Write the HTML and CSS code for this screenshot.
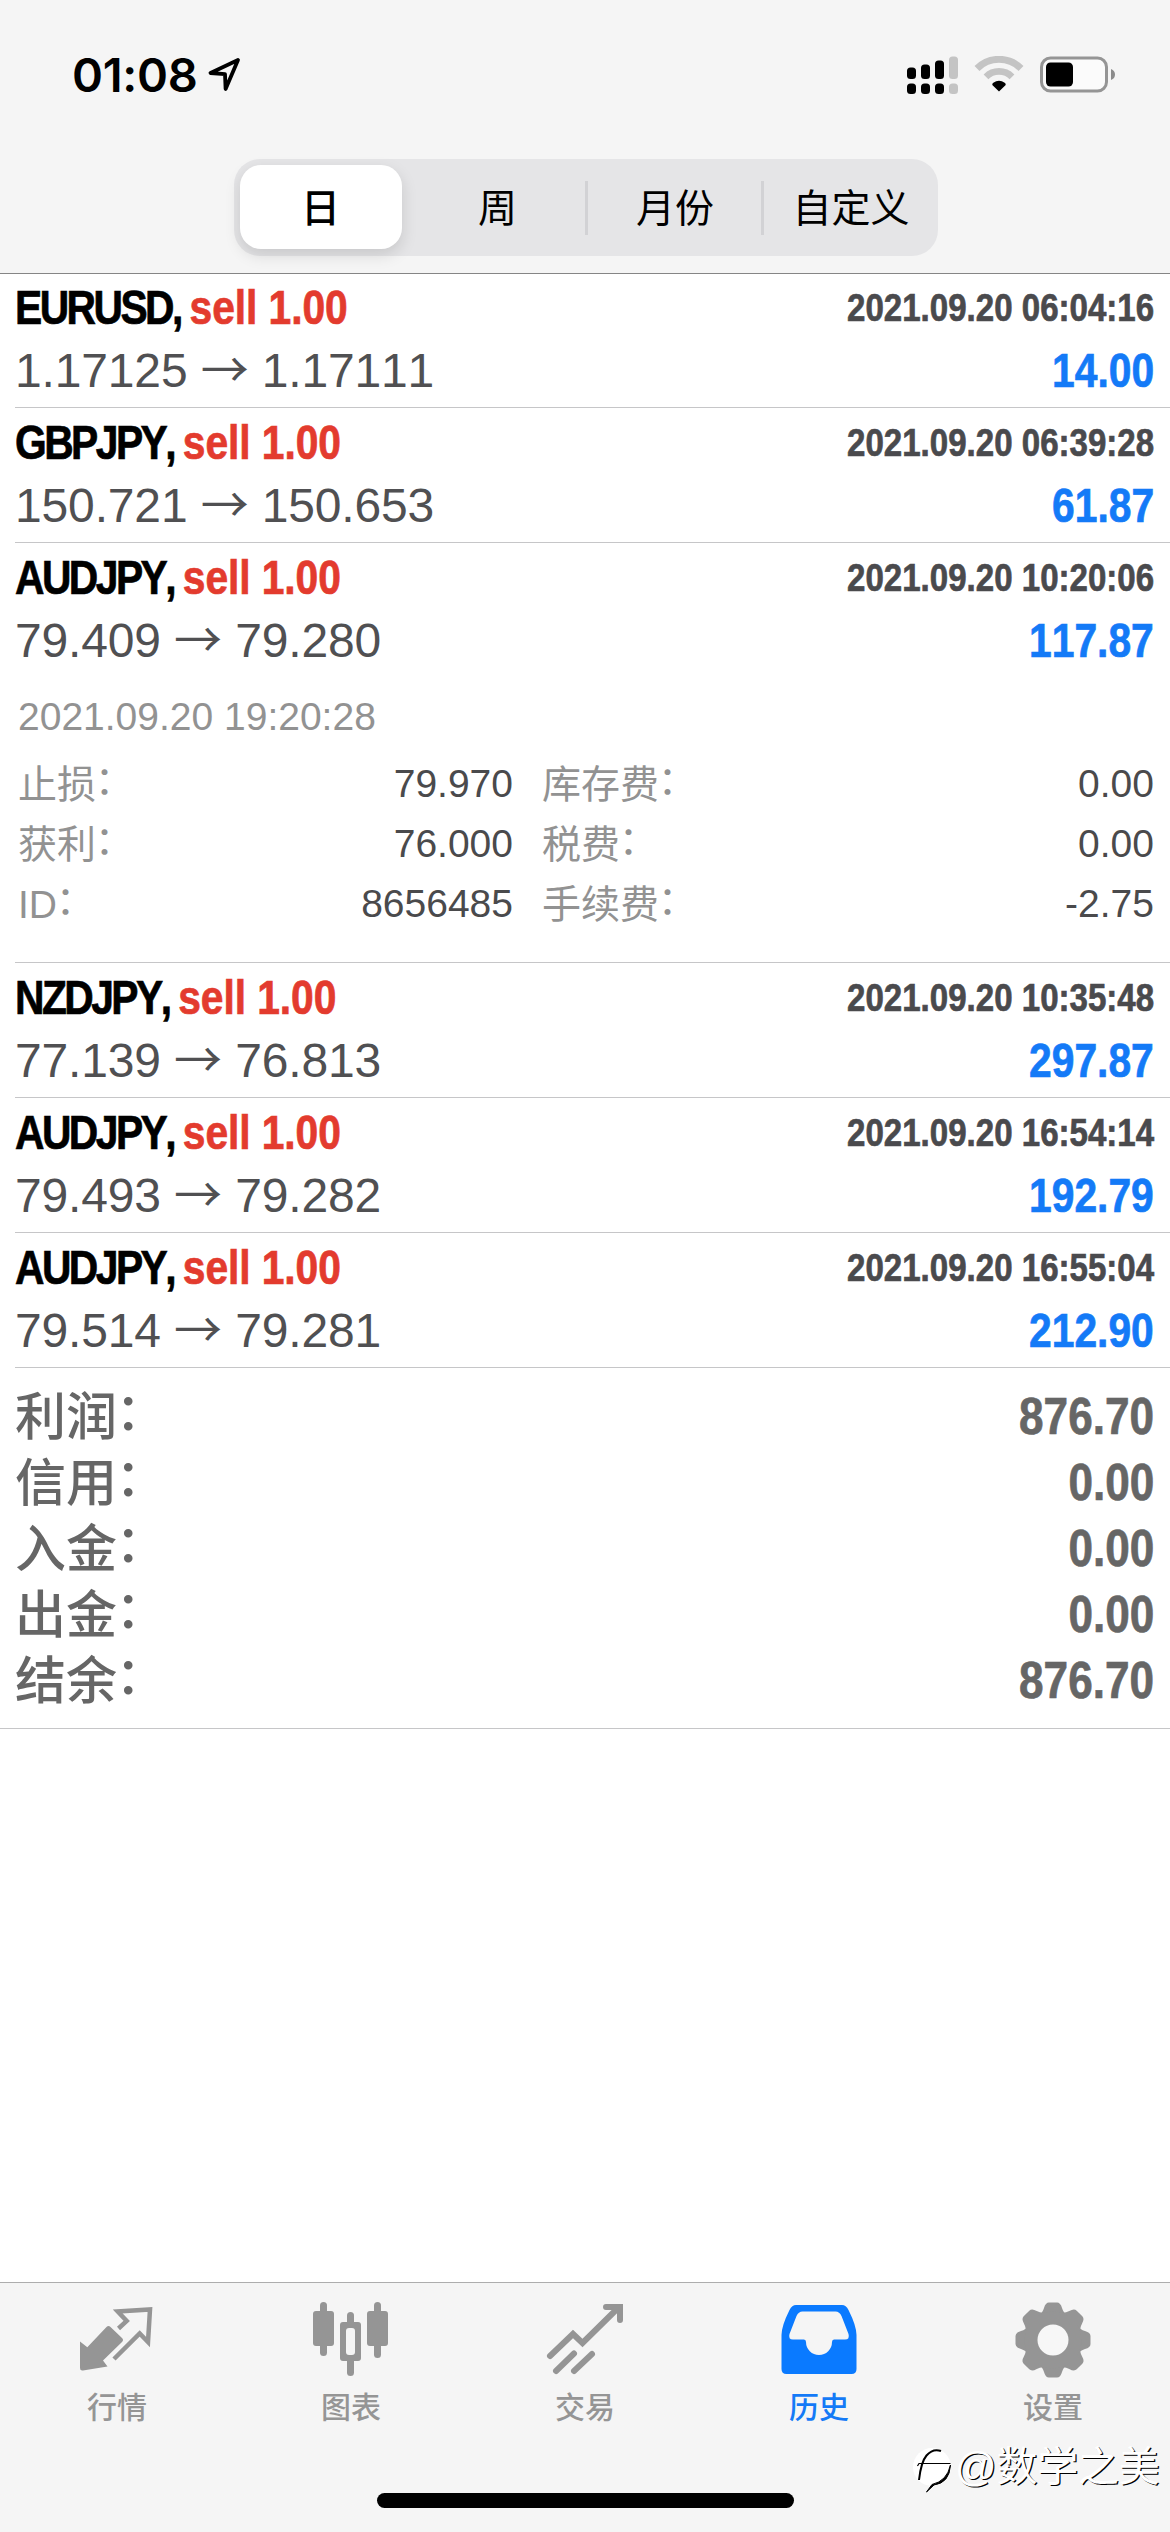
FILE: index.html
```html
<!DOCTYPE html>
<html lang="zh-CN">
<head>
<meta charset="utf-8">
<title>历史</title>
<link rel="stylesheet" href="styles.css">
</head>
<body>
<div class="app">
  <header class="top">
    <div class="status">
      <div class="status-left">
        <span class="clock">01:08</span>
        <svg class="loc" viewBox="0 0 34 36" width="34" height="36"><path d="M31 4 L3.500 17 L18 18.200 L18.600 33 Z" fill="none" stroke="#000" stroke-width="3.800" stroke-linejoin="round"/></svg>
      </div>
      <div class="status-right">
        <svg width="52" height="38" viewBox="0 0 52 38">
          <g fill="#000"><rect x="0" y="11.500" width="9" height="11.500" rx="3.500"/><rect x="14" y="8.500" width="9" height="14.500" rx="3.500"/><rect x="28" y="4.500" width="9" height="18.500" rx="3.500"/><rect x="0" y="27.500" width="9" height="10.500" rx="3.500"/><rect x="14" y="27.500" width="9" height="10.500" rx="3.500"/><rect x="28" y="27.500" width="9" height="10.500" rx="3.500"/></g>
          <g fill="#c4c4c4"><rect x="42" y="0.500" width="9" height="22.500" rx="3.500"/><rect x="42" y="27.500" width="9" height="10.500" rx="3.500"/></g>
        </svg>
        <svg class="wifi" width="50" height="38" viewBox="0 0 50 38">
          <path d="M3 12.500 A31 31 0 0 1 47 12.500" fill="none" stroke="#c4c4c4" stroke-width="7"/>
          <path d="M12 20.800 A18.500 18.500 0 0 1 38 20.800" fill="none" stroke="#c4c4c4" stroke-width="6.800"/>
          <path d="M25 35.500 L18.300 29 Q18 27.500 19.300 26.800 Q25 22.800 30.700 26.800 Q32 27.500 31.700 29 Z" fill="#000"/>
        </svg>
        <svg class="battery" width="76" height="38" viewBox="0 0 76 38">
          <rect x="1.500" y="2" width="65" height="33" rx="9" fill="#fbfbfb" stroke="#959595" stroke-width="3"/>
          <rect x="6" y="6.500" width="27" height="24" rx="4.500" fill="#000"/>
          <path d="M71 13 Q75 14.500 75 18.500 Q75 22.500 71 24 Z" fill="#8c8c8c"/>
        </svg>
      </div>
    </div>
    <div class="segments">
      <div class="seg on"><span>日</span></div><div class="seg">周</div><div class="seg line">月份</div><div class="seg line">自定义</div>
    </div>
  </header>

  <main class="list">
    <section class="deal">
      <div class="row"><div class="name nar">EURUSD, <span class="sell">sell 1.00</span></div><div class="time nar">2021.09.20 06:04:16</div></div>
      <div class="row"><div class="price">1.17125 <span class="arr">→</span> 1.17111</div><div class="profit nar">14.00</div></div>
    </section>
    <section class="deal">
      <div class="row"><div class="name nar">GBPJPY, <span class="sell">sell 1.00</span></div><div class="time nar">2021.09.20 06:39:28</div></div>
      <div class="row"><div class="price">150.721 <span class="arr">→</span> 150.653</div><div class="profit nar">61.87</div></div>
    </section>
    <section class="deal">
      <div class="row"><div class="name nar">AUDJPY, <span class="sell">sell 1.00</span></div><div class="time nar">2021.09.20 10:20:06</div></div>
      <div class="row"><div class="price">79.409 <span class="arr">→</span> 79.280</div><div class="profit nar">117.87</div></div>
      <div class="closed">2021.09.20 19:20:28</div>
      <div class="details">
        <span class="key">止损<i>：</i></span><span class="val">79.970</span><span class="key">库存费<i>：</i></span><span class="val">0.00</span>
        <span class="key">获利<i>：</i></span><span class="val">76.000</span><span class="key">税费<i>：</i></span><span class="val">0.00</span>
        <span class="key">ID<i>：</i></span><span class="val">8656485</span><span class="key">手续费<i>：</i></span><span class="val">-2.75</span>
      </div>
    </section>
    <section class="deal">
      <div class="row"><div class="name nar">NZDJPY, <span class="sell">sell 1.00</span></div><div class="time nar">2021.09.20 10:35:48</div></div>
      <div class="row"><div class="price">77.139 <span class="arr">→</span> 76.813</div><div class="profit nar">297.87</div></div>
    </section>
    <section class="deal">
      <div class="row"><div class="name nar">AUDJPY, <span class="sell">sell 1.00</span></div><div class="time nar">2021.09.20 16:54:14</div></div>
      <div class="row"><div class="price">79.493 <span class="arr">→</span> 79.282</div><div class="profit nar">192.79</div></div>
    </section>
    <section class="deal">
      <div class="row"><div class="name nar">AUDJPY, <span class="sell">sell 1.00</span></div><div class="time nar">2021.09.20 16:55:04</div></div>
      <div class="row"><div class="price">79.514 <span class="arr">→</span> 79.281</div><div class="profit nar">212.90</div></div>
    </section>
    <section class="totals">
      <div class="total"><span class="label">利润<i>：</i></span><span class="sum nar">876.70</span></div>
      <div class="total"><span class="label">信用<i>：</i></span><span class="sum nar">0.00</span></div>
      <div class="total"><span class="label">入金<i>：</i></span><span class="sum nar">0.00</span></div>
      <div class="total"><span class="label">出金<i>：</i></span><span class="sum nar">0.00</span></div>
      <div class="total"><span class="label">结余<i>：</i></span><span class="sum nar">876.70</span></div>
    </section>
  </main>

  <footer class="bottom">
    <nav class="tabs">
      <div class="tab">
        <svg width="78" height="78" viewBox="0 0 78 78"><path d="M2 36.500 L9.300 42.300 L28.500 22 Q30.500 20 32.500 22 L44 33 Q46 35 44 37 L25 55.500 L29.500 61.500 L5 65.500 Q2 66 2 63 Z"/><path d="M40.500 23.500 L48.700 16 L39.700 6.500 L72 4.500 L70 37 L61.700 28.500 L36 54" fill="none" stroke="#959595" stroke-width="4.500"/></svg>
        <span>行情</span>
      </div>
      <div class="tab">
        <svg width="78" height="78" viewBox="0 0 78 78"><g><rect x="1" y="6" width="21" height="35" rx="3"/><rect x="8" y="-3" width="7" height="54" rx="3.500"/><rect x="55" y="6" width="21" height="35" rx="3"/><rect x="62" y="-3" width="7" height="56" rx="3.500"/><rect x="35" y="7" width="7" height="64" rx="3.500"/><rect x="28" y="17" width="21" height="39" rx="3"/></g><rect x="34" y="23" width="9" height="27" rx="3" fill="#f5f5f5"/></svg>
        <span>图表</span>
      </div>
      <div class="tab">
        <svg width="78" height="78" viewBox="0 0 78 78"><g fill="none" stroke="#959595" stroke-width="6" stroke-linecap="round"><path d="M4 51 L27 29 L36.500 38 L72 3"/><path d="M10 66 L28 48.500 M28 66 L46 49"/><path d="M60 2 H74 V15"/></g></svg>
        <span>交易</span>
      </div>
      <div class="tab active">
        <svg width="78" height="78" viewBox="0 0 78 78"><path fill-rule="evenodd" d="M16 0 H62 Q66 0 68.500 5 Q76.500 21 76.500 30 V64 Q76.500 69 71.500 69 H6.500 Q1.500 69 1.500 64 V30 Q1.500 21 9.500 5 Q12 0 16 0 Z M22.500 6.500 Q18.500 6.500 16.500 11 L9.500 29 Q8 34.500 13 34.500 H24 Q26 34.500 26 37 A13 13 0 0 0 52 37 Q52 34.500 54 34.500 H65 Q70 34.500 68.500 29 L61.500 11 Q59.500 6.500 55.500 6.500 Z"/></svg>
        <span>历史</span>
      </div>
      <div class="tab">
        <svg width="78" height="78" viewBox="-39 -39 78 78"><g transform="translate(0,-4)"><g><path id="tooth" d="M-14 -25 Q-10.500 -27 -9 -32 Q-7.500 -37.500 -4 -37.500 H4 Q7.500 -37.500 9 -32 Q10.500 -27 14 -25 L0 0 Z"/><use href="#tooth" transform="rotate(45)"/><use href="#tooth" transform="rotate(90)"/><use href="#tooth" transform="rotate(135)"/><use href="#tooth" transform="rotate(180)"/><use href="#tooth" transform="rotate(225)"/><use href="#tooth" transform="rotate(270)"/><use href="#tooth" transform="rotate(315)"/></g><circle r="28.500"/><circle r="15.500" fill="#f7f7f7"/></g></svg>
        <span>设置</span>
      </div>
    </nav>
    <div class="home"></div>
    <div class="mark">
      <svg width="42" height="48" viewBox="0 0 42 48"><circle cx="20" cy="22" r="19" fill="#fff"/><path d="M7 35 Q9 17 14.500 10.500 Q21 3 29 6" fill="none" stroke="#000" stroke-width="2"/><path d="M5.500 21 L7 18.500 H38.500" fill="none" stroke="#000" stroke-width="1.200"/><path d="M38.500 20 Q37.500 38 22 40 L14.500 47 L20 39.500 Q35 36 38.500 20 Z" fill="#000" stroke="#000" stroke-width="1"/></svg>
      <span>@数学之美</span>
    </div>
  </footer>
</div>
</body>
</html>
```
FILE: styles.css
```css
* { box-sizing: border-box; }
body { margin: 0; background: #fff; font-family: "Liberation Sans", "Noto Sans CJK SC", sans-serif; }
i { font-style: normal; display: inline-block; transform: translate(-.03em, -.1em); }
.app { width: 1170px; height: 2532px; display: flex; flex-direction: column; overflow: hidden; position: relative; }
.top { height: 274px; background: #f5f5f5; border-bottom: 1px solid #858585; display: flex; flex-direction: column; align-items: center; }
.status { width: 100%; height: 159px; padding: 56px 54px 0 72px; display: flex; justify-content: space-between; align-items: flex-start; }
.status-left, .status-right { display: flex; align-items: flex-start; }
.clock { font: 600 47px/38px Inter, sans-serif; letter-spacing: -.3px; }
.loc { margin-left: 10px; }
.wifi { margin-left: 15px; }
.battery { margin-left: 16px; }
.segments { width: 704px; height: 97px; margin-left: 1px; border-radius: 26px; background: #e5e5e7; display: grid; grid-template-columns: repeat(4, 1fr); }
.seg { font-size: 39px; display: flex; align-items: center; justify-content: center; padding-bottom: 6px; position: relative; }
.seg.line { padding-left: 3px; }
.seg.on { padding: 6px 8px 7px 6px; font-weight: 500; }
.seg.on span { flex: 1; height: 84px; padding-bottom: 5px; border-radius: 21px; background: #fff; box-shadow: 0 6px 16px rgba(0,0,0,.13); display: flex; align-items: center; justify-content: center; }
.seg.line::before { content: ""; position: absolute; left: -1px; top: 22px; width: 3px; height: 54px; background: #d2d2d5; }

/* condensed bold face for symbols, times and amounts */
.nar { font-weight: 700; transform: scaleX(.85); transform-origin: right center; -webkit-text-stroke: .7px currentColor; }
.deal { margin-left: 15px; padding-right: 16px; height: 135px; border-bottom: 1px solid #c6c6c8; }
.deal:first-child { height: 134px; }
.deal:nth-child(3) { height: 420px; }
.row { display: flex; justify-content: space-between; align-items: center; height: 60px; }
.deal .row:first-child { padding-top: 2px; height: 67px; }
.deal:first-child .row:first-child { padding-top: 1px; height: 66px; }
.name { font-size: 48px; white-space: pre; font-kerning: none; letter-spacing: -3px; }
.name.nar { transform: scaleX(.85); transform-origin: left center; }
.sell { color: #e33b2e; letter-spacing: -.1px; }
.time { font-size: 39px; color: #4a4a4d; }
.time.nar { transform: scaleX(.848); }
.price { font-size: 48px; color: #505052; white-space: pre; font-kerning: none; letter-spacing: -.15px; line-height: 56px; }
.arr { font-family: "Noto Sans CJK SC", sans-serif; line-height: 1; }
.profit { font-size: 48px; color: #147af7; font-kerning: none; }
.closed { font-size: 39px; color: #929292; line-height: 45px; padding: 24px 0 0 3px; }
.details { display: grid; grid-template-columns: 130px 365px 200px 1fr; grid-auto-rows: 60px; margin-top: 13px; padding-left: 3px; font-size: 39px; align-items: center; color: #4a4a4c; font-kerning: none; }
.key { color: #929292; white-space: nowrap; padding-bottom: 3px; }
.key:nth-of-type(4n+3) { padding-left: 29px; }
.val { text-align: right; padding-top: 3px; }
.totals { height: 361px; padding: 15px 16px 0 15px; border-bottom: 1px solid #c6c6c8; color: #666; }
.total { height: 66px; display: flex; justify-content: space-between; align-items: center; font-size: 51px; font-weight: 500; }
.label { padding-top: 3px; line-height: 60px; }
.sum.nar { transform: scaleX(.865); }

.bottom { margin-top: auto; height: 250px; background: #f5f5f5; border-top: 1px solid #adadad; position: relative; }
.tabs { display: grid; grid-template-columns: repeat(5, 234px); padding-top: 22px; }
.tab { display: flex; flex-direction: column; align-items: center; color: #959595; fill: #959595; font-size: 30px; font-weight: 500; line-height: 44px; }
.tab svg { overflow: visible; margin-bottom: 3px; }
.tab.active { color: #147af7; fill: #0a7aff; }
.home { position: absolute; left: 377px; top: 210px; width: 417px; height: 15px; border-radius: 8px; background: #000; }
.mark { position: absolute; left: 912px; top: 160px; display: flex; align-items: center; color: #fff; font-size: 41px; line-height: 48px; white-space: nowrap; text-shadow: 1.300px 1.300px .5px #000; }
.mark span { padding-bottom: 4px; margin-left: 1px; letter-spacing: -.2px; }
```
